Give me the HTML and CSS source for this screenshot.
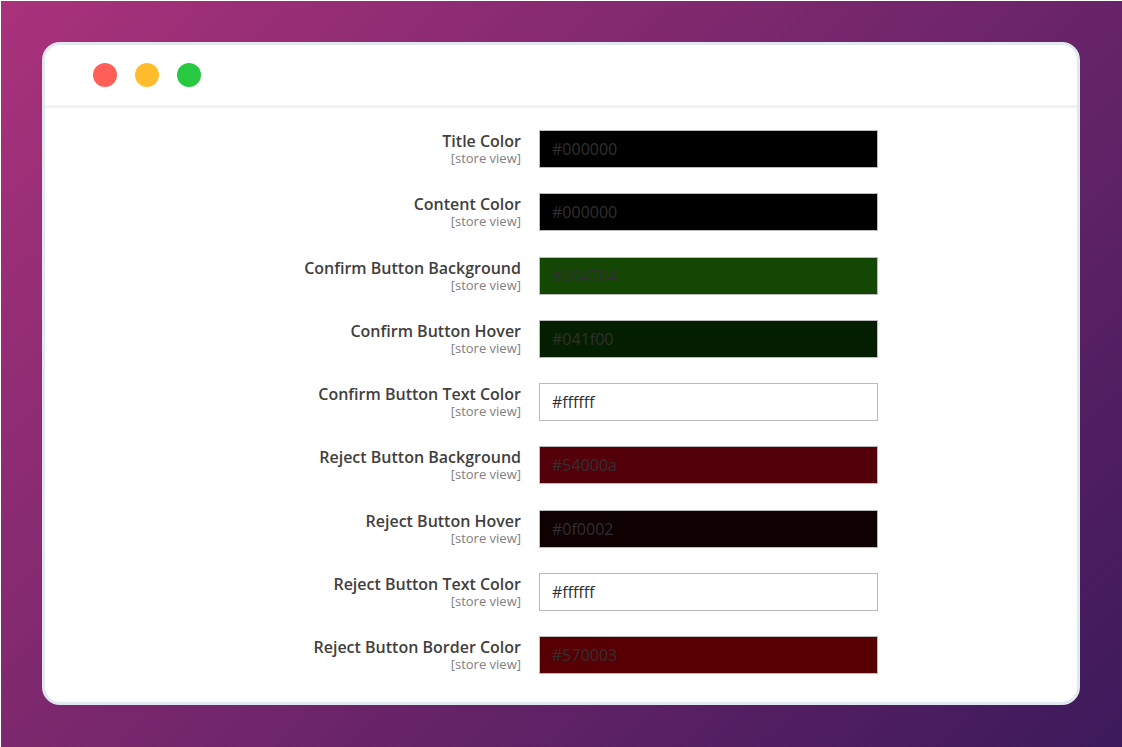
FILE: index.html
```html
<!DOCTYPE html>
<html lang="en">

<head>
    <meta charset="UTF-8">
    <meta name="viewport" content="width=device-width, initial-scale=1.0">
    <title>Button Colors</title>
    <link rel="stylesheet" href="styles.css">
</head>

<body>
    <main class="window">
        <header class="title-bar">
            <span class="dot red"></span>
            <span class="dot yellow"></span>
            <span class="dot green"></span>
        </header>
        <form class="settings">
            <div class="field">
                <label for="title-color">Title Color <span>[store view]</span></label>
                <input type="text" id="title-color" class="black" value="#000000">
            </div>
            <div class="field">
                <label for="content-color">Content Color <span>[store view]</span></label>
                <input type="text" id="content-color" class="black" value="#000000">
            </div>
            <div class="field">
                <label for="confirm-background">Confirm Button Background <span>[store view]</span></label>
                <input type="text" id="confirm-background" class="confirm" value="#004704">
            </div>
            <div class="field">
                <label for="confirm-hover">Confirm Button Hover <span>[store view]</span></label>
                <input type="text" id="confirm-hover" class="confirm-hover" value="#041f00">
            </div>
            <div class="field">
                <label for="confirm-text">Confirm Button Text Color <span>[store view]</span></label>
                <input type="text" id="confirm-text" value="#ffffff">
            </div>
            <div class="field">
                <label for="reject-background">Reject Button Background <span>[store view]</span></label>
                <input type="text" id="reject-background" class="reject" value="#54000a">
            </div>
            <div class="field">
                <label for="reject-hover">Reject Button Hover <span>[store view]</span></label>
                <input type="text" id="reject-hover" class="reject-hover" value="#0f0002">
            </div>
            <div class="field">
                <label for="reject-text">Reject Button Text Color <span>[store view]</span></label>
                <input type="text" id="reject-text" value="#ffffff">
            </div>
            <div class="field">
                <label for="reject-border">Reject Button Border Color <span>[store view]</span></label>
                <input type="text" id="reject-border" class="reject-border" value="#570003">
            </div>
        </form>
    </main>
</body>

</html>
```
FILE: styles.css
```css
* {
    margin: 0;
    padding: 0;
    box-sizing: border-box;
}

body {
    font-family: "Open Sans", sans-serif;
    min-height: 100vh;
    display: flex;
    padding: 41px 42px 42px 41px;
    border-top: 1px solid #fff;
    border-left: 1px solid #fff;
    background: linear-gradient(135deg, #a9327b, #3c1a5b) padding-box;
}

.window {
    flex: 1;
    display: flex;
    flex-direction: column;
    background-color: #fff;
    border: 3px solid #e1e8ef;
    border-radius: 18px;
}

/* Window buttons */
.title-bar {
    display: flex;
    gap: 18px;
    padding: 18px 48px;
    border-bottom: 3px solid #f2f2f2;
}

.dot {
    width: 24px;
    height: 24px;
    border-radius: 50%;
}

.red {
    background-color: #ff5f57;
}

.yellow {
    background-color: #ffbd2e;
}

.green {
    background-color: #28c941;
}

/* Color settings */
.settings {
    flex: 1;
    display: flex;
    flex-direction: column;
    justify-content: space-between;
    padding: 22px 0 28px;
}

.field {
    display: grid;
    grid-template-columns: 476fr 339fr 181fr;
    column-gap: 18px;
}

label {
    font-size: 16px;
    font-weight: 600;
    line-height: 22px;
    text-align: right;
    color: #41403e;
}

label span {
    display: block;
    font-size: 13px;
    font-weight: 400;
    line-height: 12px;
    color: #808080;
}

input {
    height: 38px;
    padding: 0 12px;
    border: 1px solid #bbb;
    background-color: #fff;
    color: #303030;
    font-family: inherit;
    font-size: 16px;
}

.black {
    background-color: #000;
}

.confirm {
    background-color: #144704;
}

.confirm-hover {
    background-color: #041f00;
}

.reject {
    background-color: #54000a;
}

.reject-hover {
    background-color: #0f0002;
}

.reject-border {
    background-color: #570003;
}
```
